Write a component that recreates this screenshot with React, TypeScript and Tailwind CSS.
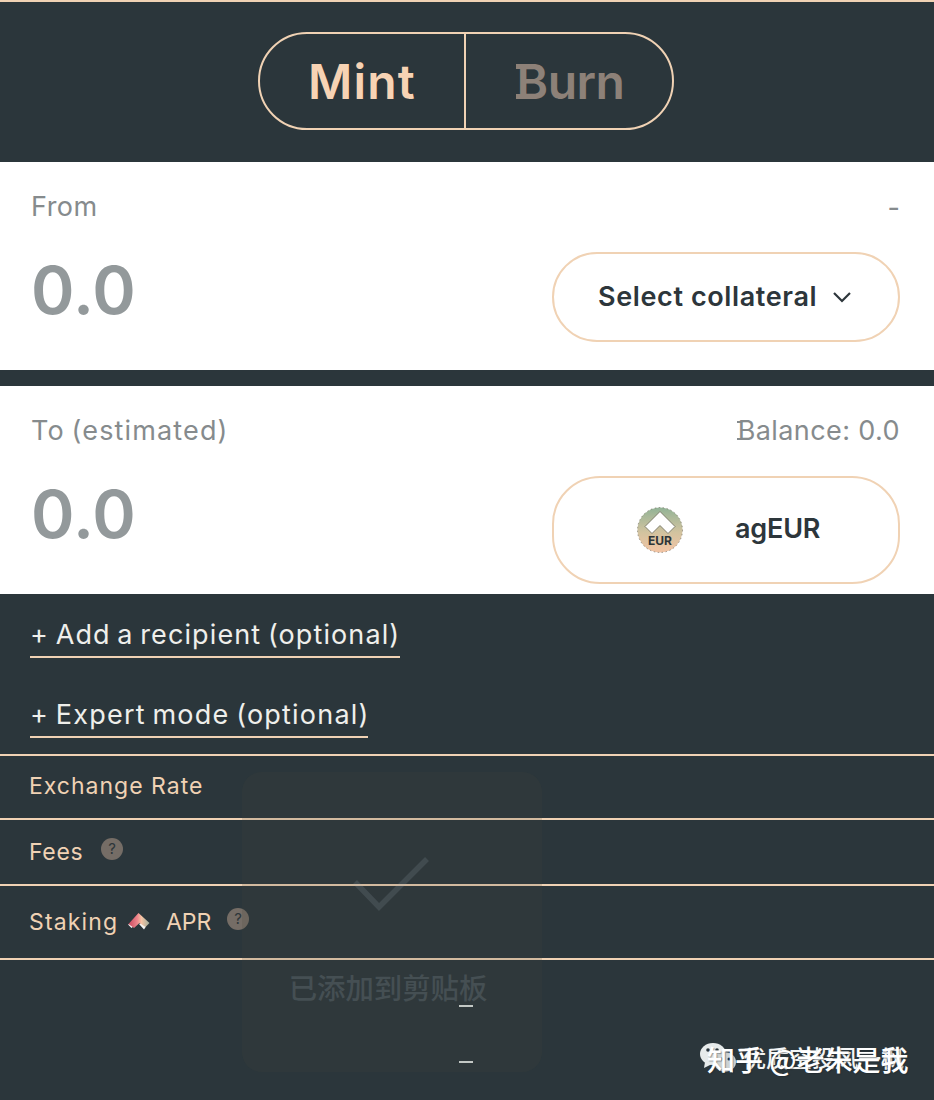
import React from "react";

const line = "border-[#f0d2b4]";

function Help({ className }: { className: string }) {
  return (
    <span className={`inline-flex h-[22px] w-[22px] items-center justify-center rounded-full bg-[#756d66] text-[15px] leading-none font-normal tracking-normal text-[#2d363a] ${className}`}>?</span>
  );
}

function AngleMark() {
  return (
    <svg width="22" height="20" viewBox="0 0 22 20">
      <defs>
        <linearGradient id="mark" x1="0" x2="1" y1="0" y2="0">
          <stop offset="0" stopColor="#c9485f" />
          <stop offset="0.42" stopColor="#ee858b" />
          <stop offset="0.62" stopColor="#f5c4a4" />
          <stop offset="1" stopColor="#9fb09f" />
        </linearGradient>
      </defs>
      <path d="M0 12.500 L3.500 16 L6 14 L3 11Z M11 12 L16 17.500 L18 14.500 L13 11Z" fill="#f4f4f2" />
      <path d="M10.500 1 L21.500 11 L17.500 15 L11.500 11 L6 16 L0.500 12Z" fill="url(#mark)" />
    </svg>
  );
}

function EurToken() {
  return (
    <svg width="46" height="46" viewBox="0 0 46 46">
      <defs>
        <linearGradient id="coin" x1="0" x2="0" y1="0" y2="1">
          <stop offset="0" stopColor="#92b396" />
          <stop offset="0.55" stopColor="#d2c39f" />
          <stop offset="1" stopColor="#f3c4a4" />
        </linearGradient>
      </defs>
      <circle cx="23" cy="23" r="22.500" fill="url(#coin)" stroke="#665f50" strokeWidth="0.600" strokeDasharray="1.500 2.500" />
      <path d="M23 4.500 L38 19.500 L31 26.500 L23 18.500 L15 26.500 L8 19.500Z" fill="#fff" stroke="#6b6a58" strokeWidth="0.800" />
      <text x="23" y="38" textAnchor="middle" fontFamily="Inter, sans-serif" fontWeight="700" fontSize="12" fill="#2d3437">EUR</text>
    </svg>
  );
}

export default function App() {
  return (
    <div className="relative flex h-[1100px] w-[934px] flex-col overflow-hidden bg-[#2b363b] font-['Inter','Noto_Sans_CJK_SC',sans-serif] whitespace-nowrap text-[#f0d2b4]">
      <header className={`flex h-[162px] justify-center border-t-2 ${line} pt-[30px] pr-[2px]`}>
        <div className={`flex h-[98px] w-[416px] rounded-[49px] border-2 ${line} text-[48px] leading-[95px] font-semibold`}>
          <button className={`w-[206px] border-r-2 ${line} tracking-[1.2px] text-[#f7d3b4]`}>Mint</button>
          <button className="flex-1 pl-[3px] tracking-[-0.5px] text-[#8d8178]">
            <span className="relative before:absolute before:top-[12px] before:left-[-1px] before:h-[5px] before:w-[9px] before:bg-[#8d8178] after:absolute after:bottom-[12px] after:left-[-1px] after:h-[5px] after:w-[9px] after:bg-[#8d8178]">B</span>urn
          </button>
        </div>
      </header>

      <section className="flex h-[208px] justify-between bg-white pr-[34px] pl-[31px]">
        <div>
          <div className="mt-[27px] text-[27px] leading-9 tracking-[0.5px] text-[#868b8d]">From</div>
          <div className="mt-[20px] text-[66px] leading-[90px] font-semibold tracking-[0.2px] text-[#93999b]">0.0</div>
        </div>
        <div className="flex w-[348px] flex-col">
          <div className="mt-[28px] text-right text-[27px] leading-9 text-[#868b8d]">-</div>
          <button className={`mt-[26px] flex h-[90px] items-center rounded-[45px] border-2 ${line} pl-[44px] text-[27px] font-semibold tracking-[0.62px] text-[#2d363b]`}>
            <span className="w-[235px] text-left">Select collateral</span>
            <svg width="18" height="12" viewBox="0 0 18 12" fill="none" stroke="currentColor" strokeWidth="2.200"><path d="M1 2 L9 10 L17 2" /></svg>
          </button>
        </div>
      </section>

      <section className="mt-4 flex h-[208px] justify-between bg-white pr-[34px] pl-[31px]">
        <div>
          <div className="mt-[27px] text-[27px] leading-9 tracking-[1.15px] text-[#868b8d] [word-spacing:-2px]">To (estimated)</div>
          <div className="mt-[20px] text-[66px] leading-[90px] font-semibold tracking-[0.2px] text-[#93999b]">0.0</div>
        </div>
        <div className="flex w-[348px] flex-col">
          <div className="mt-[27px] text-right text-[27px] leading-9 tracking-[0.4px] text-[#868b8d]">
            <span className="relative before:absolute before:top-[7px] before:left-[-1px] before:h-[2px] before:w-[5px] before:bg-[#868b8d] after:absolute after:bottom-[7px] after:left-[-1px] after:h-[2px] after:w-[5px] after:bg-[#868b8d]">B</span>alance: 0.0
          </div>
          <button className={`mt-[27px] flex h-[108px] items-center rounded-[48px] border-2 ${line} pl-[83px] text-[27px] font-semibold text-[#2d363b]`}>
            <EurToken />
            <span className="ml-[52px] pb-[2px] tracking-[-0.2px]">agEUR</span>
          </button>
        </div>
      </section>

      <section className="flex h-[160px] flex-col items-start pl-[30px] text-[27px] text-[#efefeb]">
        <button className={`mt-[23px] h-[41px] w-[370px] border-b-2 ${line} pb-[4px] text-left leading-[35px] tracking-[1.1px] [word-spacing:-2px]`}>+ Add a recipient (optional)</button>
        <button className={`mt-[39px] h-[41px] w-[338px] border-b-2 ${line} pb-[4px] text-left leading-[35px] tracking-[1.2px] [word-spacing:-2px]`}>+ Expert mode (optional)</button>
      </section>

      <div className={`flex h-[66px] items-center border-y-2 ${line} pb-px pl-[29px] text-[23px] tracking-[1px]`}>Exchange Rate</div>
      <div className={`flex h-[66px] items-center border-b-2 ${line} pl-[29px] text-[23px] tracking-[0.7px]`}><span className="w-[72px]">Fees</span><Help className="mb-[7px]" /></div>
      <div className={`flex h-[74px] items-center border-b-2 ${line} pl-[29px] text-[23px]`}>
        <span className="w-[99px] tracking-[1.15px]">Staking</span><AngleMark /><span className="ml-[16px] w-[61px]">APR</span><Help className="mb-[7px]" />
      </div>
      <div className="flex flex-col items-center pt-[45px] pr-[2px]">
        <div className="h-0.5 w-[14px] bg-[#dce2e1]" />
        <div className="mt-[54px] h-0.5 w-[14px] bg-[#dce2e1]" />
      </div>

      <div className="absolute top-[772px] left-[242px] flex h-[300px] w-[300px] flex-col items-center rounded-[20px] bg-[#46483c]/17 font-['Noto_Sans_CJK_SC',sans-serif]">
        <svg className="mt-[84px] mr-[2px]" width="76" height="56" viewBox="0 0 76 56" fill="none" stroke="#9fb0b8" strokeOpacity="0.16" strokeWidth="5.500"><path d="M2 26 L26 51 L74 3" /></svg>
        <div className="mt-[51px] pr-[8px] text-[28.4px] leading-[48px] font-medium text-[#454f53]">已添加到剪贴板</div>
      </div>

      <div className="absolute top-[1040px] left-[700px] h-9 w-[212px] font-['Noto_Sans_CJK_SC',sans-serif] text-white">
        <svg className="absolute top-[2px] left-0" width="38" height="34" viewBox="0 0 38 34">
          <ellipse cx="13" cy="12" rx="13" ry="11" fill="#e7ebeb" /><path d="M5 20 L4 26 L12 22Z" fill="#e7ebeb" />
          <ellipse cx="25" cy="20" rx="11" ry="10" fill="#cdd3d3" /><path d="M28 27 L33 31 L32 25Z" fill="#cdd3d3" />
          <g fill="#2b363b"><circle cx="8" cy="8" r="1.800" /><circle cx="17" cy="8" r="1.800" /><circle cx="22" cy="17" r="1.500" /><circle cx="29" cy="17" r="1.500" /></g>
        </svg>
        <div className="absolute top-[-1px] left-[43px] text-[23px] leading-9 font-medium text-[#f3f5f5]">优质空投风一枫</div>
        <div className="absolute top-[1px] left-[7px] text-[28px] leading-9 font-medium [text-shadow:1px_1px_1px_#1b242866]">知乎 @老朱是我</div>
      </div>
    </div>
  );
}
